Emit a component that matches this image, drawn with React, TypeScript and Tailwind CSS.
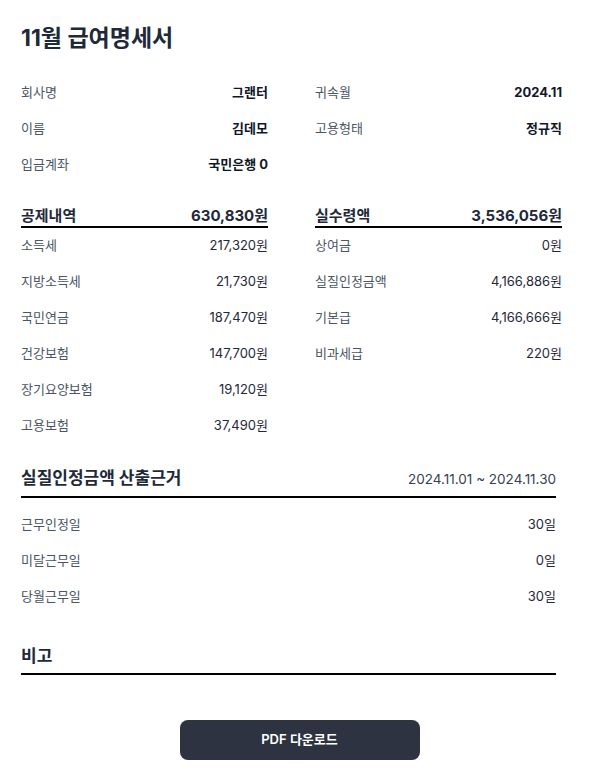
import React from 'react';

type Row = { label: string; value: string };

const infoLeft: Row[] = [
  { label: '회사명', value: '그랜터' },
  { label: '이름', value: '김데모' },
  { label: '입금계좌', value: '국민은행 0' },
];

const infoRight: Row[] = [
  { label: '귀속월', value: '2024.11' },
  { label: '고용형태', value: '정규직' },
];

const deductions: Row[] = [
  { label: '소득세', value: '217,320원' },
  { label: '지방소득세', value: '21,730원' },
  { label: '국민연금', value: '187,470원' },
  { label: '건강보험', value: '147,700원' },
  { label: '장기요양보험', value: '19,120원' },
  { label: '고용보험', value: '37,490원' },
];

const payments: Row[] = [
  { label: '상여금', value: '0원' },
  { label: '실질인정금액', value: '4,166,886원' },
  { label: '기본급', value: '4,166,666원' },
  { label: '비과세급', value: '220원' },
];

const workDays: Row[] = [
  { label: '근무인정일', value: '30일' },
  { label: '미달근무일', value: '0일' },
  { label: '당월근무일', value: '30일' },
];

function InfoRow({ row }: { row: Row }) {
  return (
    <div className="flex h-9 items-center justify-between text-[13px]">
      <span className="text-gray-600">{row.label}</span>
      <span className="font-bold text-gray-900">{row.value}</span>
    </div>
  );
}

function AmountRow({ row }: { row: Row }) {
  return (
    <div className="flex h-9 items-center justify-between text-[13px]">
      <span className="text-gray-600">{row.label}</span>
      <span className="text-gray-800">{row.value}</span>
    </div>
  );
}

function SectionHead({ title, total }: { title: string; total: string }) {
  return (
    <div className="flex items-center justify-between border-b-2 border-black text-[15px] font-bold leading-5 text-gray-800">
      <span>{title}</span>
      <span>{total}</span>
    </div>
  );
}

export default function App() {
  return (
    <main
      className="min-h-screen bg-white px-[21px] pt-[20px]"
      style={{ fontFamily: "Inter, 'Noto Sans CJK KR', sans-serif" }}
    >
      <h1 className="text-[23px] font-bold leading-9 text-gray-800">11월 급여명세서</h1>

      <div className="mt-[19px] grid w-[541px] grid-cols-2 gap-x-[47px]">
        <div>
          {infoLeft.map((r) => (
            <InfoRow key={r.label} row={r} />
          ))}
        </div>
        <div>
          {infoRight.map((r) => (
            <InfoRow key={r.label} row={r} />
          ))}
        </div>
      </div>

      <div className="mt-[23px] grid w-[541px] grid-cols-2 gap-x-[47px]">
        <div>
          <SectionHead title="공제내역" total="630,830원" />
          <div>
            {deductions.map((r) => (
              <AmountRow key={r.label} row={r} />
            ))}
          </div>
        </div>
        <div>
          <SectionHead title="실수령액" total="3,536,056원" />
          <div>
            {payments.map((r) => (
              <AmountRow key={r.label} row={r} />
            ))}
          </div>
        </div>
      </div>

      <div className="mt-[22px] w-[535px]">
        <div className="flex items-center justify-between border-b-2 border-black pb-[4px]">
          <span className="text-[17px] font-bold text-gray-800">실질인정금액 산출근거</span>
          <span className="text-[13.5px] text-gray-700">2024.11.01 ~ 2024.11.30</span>
        </div>
        <div className="pt-[9px]">
          {workDays.map((r) => (
            <AmountRow key={r.label} row={r} />
          ))}
        </div>
      </div>

      <div className="mt-[29px] w-[535px] border-b-2 border-black pb-[4px]">
        <span className="text-[17px] font-bold text-gray-800">비고</span>
      </div>

      <div className="mt-[45px] flex w-[557px] justify-center">
        <button className="h-10 w-[240px] rounded-lg bg-[#2d3340] text-[13px] font-semibold text-white">
          PDF 다운로드
        </button>
      </div>
    </main>
  );
}
